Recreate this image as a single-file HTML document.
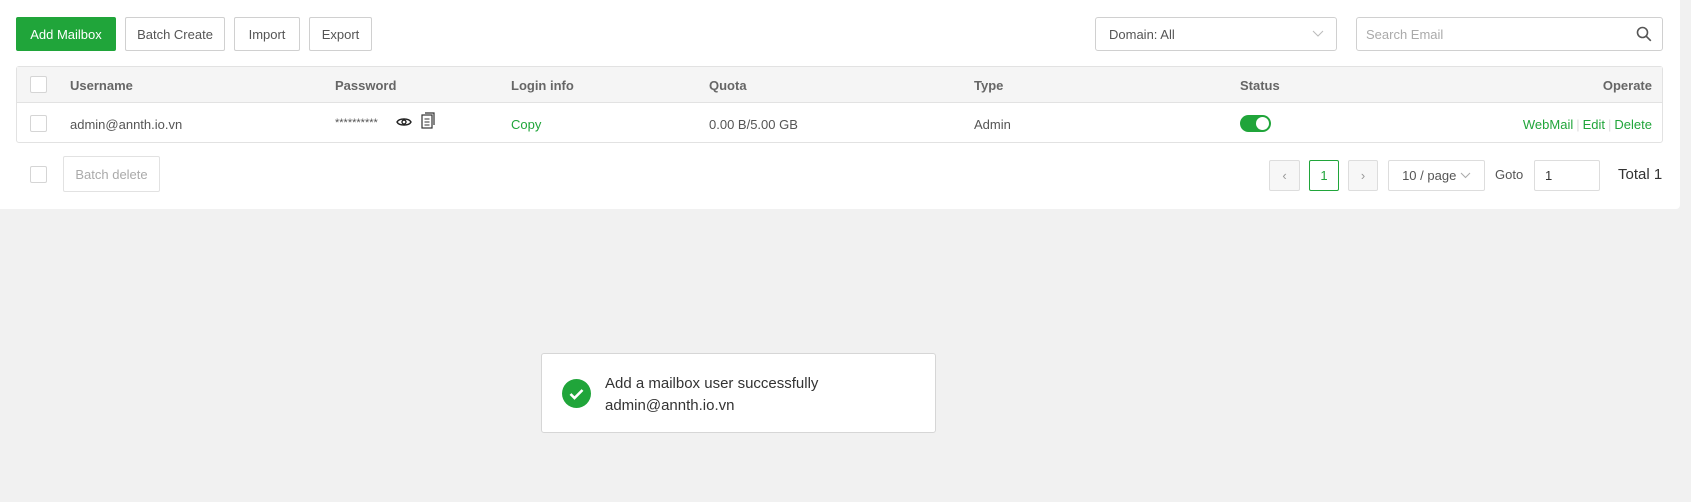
<!DOCTYPE html>
<html><head><meta charset="utf-8"><style>
*{box-sizing:border-box;margin:0;padding:0}
body{width:1691px;height:502px;background:#f1f1f1;font-family:"Liberation Sans",sans-serif;font-size:13px;color:#555;position:relative;overflow:hidden}
.panel{position:absolute;left:0;top:0;width:1680px;height:209px;background:#fff;border-radius:0 0 4px 0}
.a{position:absolute}
.btn{position:absolute;top:17px;height:34px;border:1px solid #d0d0d0;border-radius:2px;background:#fff;color:#555;display:flex;align-items:center;justify-content:center;font-size:13px}
.g{background:#20a53a;border-color:#20a53a;color:#fff}
.tbl{position:absolute;left:16px;top:66px;width:1647px;height:77px;border:1px solid #e2e2e2;border-radius:3px}
.hd{position:absolute;left:0;top:0;right:0;height:36px;background:#f5f5f5;border-bottom:1px solid #e2e2e2}
.th{position:absolute;top:11px;font-weight:bold;color:#666;font-size:13px}
.td{position:absolute;top:50px;color:#555;font-size:13px}
.cb{position:absolute;width:17px;height:17px;border:1px solid #d5d5d5;border-radius:2px;background:#fff}
.grn{color:#20a53a}
.pg{position:absolute;top:160px;height:31px;border:1px solid #ddd;border-radius:2px;display:flex;align-items:center;justify-content:center;color:#999}
</style></head><body>
<div class="panel"></div>
<div class="btn g" style="left:16px;width:100px">Add Mailbox</div>
<div class="btn" style="left:125px;width:100px">Batch Create</div>
<div class="btn" style="left:234px;width:66px">Import</div>
<div class="btn" style="left:309px;width:63px">Export</div>
<div class="btn" style="left:1095px;width:242px;justify-content:flex-start;padding-left:13px;border-radius:3px">Domain: All
<svg class="a" style="right:12px;top:12px" width="12" height="8" viewBox="0 0 12 8"><path d="M1 1l5 5 5-5" fill="none" stroke="#bbb"/></svg></div>
<div class="btn" style="left:1356px;width:307px;justify-content:flex-start;padding-left:9px;color:#aaa;border-radius:3px">Search Email
<svg class="a" style="right:10px;top:8px" width="16" height="16" viewBox="0 0 16 16"><circle cx="6.5" cy="6.5" r="5" fill="none" stroke="#555" stroke-width="1.6"/><path d="M10.3 10.3l4.5 4.5" stroke="#555" stroke-width="1.6"/></svg></div>

<div class="tbl">
<div class="hd"></div>
<div class="cb" style="left:13px;top:9px"></div>
<div class="th" style="left:53px">Username</div>
<div class="th" style="left:318px">Password</div>
<div class="th" style="left:494px">Login info</div>
<div class="th" style="left:692px">Quota</div>
<div class="th" style="left:957px">Type</div>
<div class="th" style="left:1223px">Status</div>
<div class="th" style="right:10px">Operate</div>
<div class="cb" style="left:13px;top:48px"></div>
<div class="td" style="left:53px">admin@annth.io.vn</div>
<div class="td" style="left:318px;top:50px;font-size:11px">**********</div>
<svg class="a" style="left:379px;top:47px" width="16" height="16" viewBox="0 0 16 16"><path d="M1 8c2-4 12-4 14 0c-2 4-12 4-14 0z" fill="none" stroke="#222" stroke-width="1.4"/><circle cx="8" cy="8" r="2" fill="none" stroke="#222" stroke-width="1.4"/></svg>
<svg class="a" style="left:404px;top:45px" width="15" height="17" viewBox="0 0 15 17"><rect x="1" y="3" width="10" height="13" fill="none" stroke="#333" stroke-width="1.2"/><path d="M4 1h9v12" fill="none" stroke="#333" stroke-width="1.2"/><path d="M3.5 7h5M3.5 10h5M3.5 13h5" stroke="#333"/></svg>
<div class="td grn" style="left:494px">Copy</div>
<div class="td" style="left:692px">0.00 B/5.00 GB</div>
<div class="td" style="left:957px">Admin</div>
<div class="a" style="left:1223px;top:48px;width:31px;height:17px;border-radius:9px;background:#20a53a"><div class="a" style="right:2px;top:2px;width:13px;height:13px;border-radius:50%;background:#fff"></div></div>
<div class="td grn" style="right:10px">WebMail<span style="color:#ddd;margin:0 3px">|</span>Edit<span style="color:#ddd;margin:0 3px">|</span>Delete</div>
</div>

<div class="cb" style="left:30px;top:166px"></div>
<div class="a" style="left:63px;top:156px;width:97px;height:36px;border:1px solid #e2e2e2;border-radius:2px;color:#aaa;display:flex;align-items:center;justify-content:center">Batch delete</div>

<div class="pg" style="left:1269px;width:31px;background:#f7f7f7">&#8249;</div>
<div class="pg" style="left:1309px;width:30px;border-color:#20a53a;color:#20a53a">1</div>
<div class="pg" style="left:1348px;width:30px;background:#f7f7f7">&#8250;</div>
<div class="pg" style="left:1388px;width:97px;color:#555">10 / page&nbsp;<svg width="11" height="7" viewBox="0 0 11 7"><path d="M1 1l4.5 4.5L10 1" fill="none" stroke="#aaa"/></svg></div>
<div class="a" style="left:1495px;top:167px;color:#555">Goto</div>
<div class="pg" style="left:1534px;width:66px;justify-content:flex-start;padding-left:10px;color:#333">1</div>
<div class="a" style="left:1618px;top:166px;color:#333;font-size:15px">Total 1</div>

<div class="a" style="left:541px;top:353px;width:395px;height:80px;background:#fff;border:1px solid #d6d6d6;border-radius:3px">
<svg class="a" style="left:20px;top:25px" width="29" height="29" viewBox="0 0 29 29"><circle cx="14.5" cy="14.5" r="14.5" fill="#20a53a"/><path d="M8.5 15l4 4 8-8" fill="none" stroke="#fff" stroke-width="2.6"/></svg>
<div class="a" style="left:63px;top:19px;font-size:15px;color:#333;line-height:22px">Add a mailbox user successfully<br>admin@annth.io.vn</div>
</div>
</body></html>
